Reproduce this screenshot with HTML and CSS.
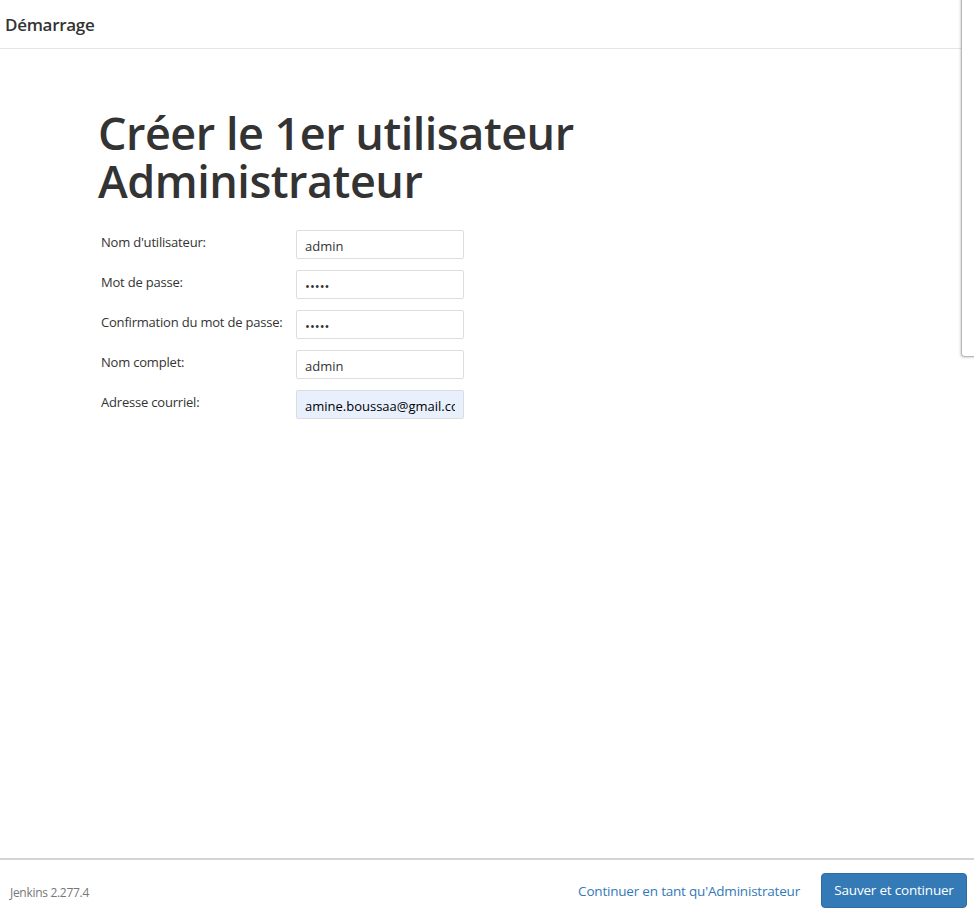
FILE: index.html
```html
<!DOCTYPE html>
<html lang="fr">
<head>
<meta charset="utf-8">
<title>Démarrage</title>
<link rel="stylesheet" href="styles.css">
</head>
<body>
<div class="backdrop-edge"></div>
<div class="page">
  <header class="topbar"><span class="title">Démarrage</span></header>
  <main class="content">
    <h1 class="heading">Créer le 1er utilisateur<br>Administrateur</h1>
    <form class="form">
      <div class="row"><label class="label">Nom d'utilisateur:</label><input class="field" type="text" value="admin"></div>
      <div class="row"><label class="label">Mot de passe:</label><input class="field" type="password" value="admin"></div>
      <div class="row"><label class="label">Confirmation du mot de passe:</label><input class="field" type="password" value="admin"></div>
      <div class="row"><label class="label">Nom complet:</label><input class="field" type="text" value="admin"></div>
      <div class="row"><label class="label">Adresse courriel:</label><input class="field autofill" type="text" value="amine.boussaa@gmail.com"></div>
    </form>
  </main>
  <footer class="footer">
    <span class="version">Jenkins 2.277.4</span>
    <div class="actions">
      <a class="link" href="#">Continuer en tant qu'Administrateur</a>
      <button class="btn" type="button">Sauver et continuer</button>
    </div>
  </footer>
</div>
</body>
</html>
```
FILE: styles.css
```css
html, body {
  margin: 0;
  padding: 0;
  background: #fff;
}
body {
  font-family: "Open Sans", "Noto Sans", "Liberation Sans", sans-serif;
  color: #333;
  width: 974px;
  height: 914px;
  overflow: hidden;
  position: relative;
}
.backdrop-edge {
  position: absolute;
  left: 961px;
  top: -4px;
  width: 40px;
  height: 360px;
  border-left: 1px solid #b8b8b8;
  border-bottom: 1px solid #b8b8b8;
  border-bottom-left-radius: 4px;
  box-shadow: -1px 1px 2px rgba(0,0,0,0.15);
}
.page {
  display: flex;
  flex-direction: column;
  height: 914px;
}
.topbar {
  height: 48px;
  border-bottom: 1px solid #e5e5e5;
  display: flex;
  align-items: center;
  padding-left: 5px;
  margin-right: 13px;
}
.title {
  font-size: 17px;
  font-weight: 600;
  color: #333;
  letter-spacing: -0.3px;
}
.content {
  flex: 1;
  padding: 60px 0 0 98px;
}
.heading {
  margin: 0 0 25px 0;
  font-size: 45px;
  line-height: 48px;
  font-weight: 600;
  color: #333;
  letter-spacing: -0.5px;
}
.form {
  display: flex;
  flex-direction: column;
  gap: 11px;
}
.row {
  display: flex;
  align-items: flex-start;
}
.label {
  width: 195px;
  padding-left: 3px;
  font-size: 13px;
  line-height: 24px;
  color: #333;
  letter-spacing: -0.2px;
}
.field {
  box-sizing: border-box;
  width: 168px;
  height: 29px;
  border: 1px solid #ddd;
  border-radius: 2px;
  padding: 3px 8px 0;
  font-family: inherit;
  font-size: 13px;
  color: #333;
  background: #fff;
  margin: 0;
}
.autofill {
  background: #e8f0fe;
  color: #000;
}
.footer {
  height: 54px;
  border-top: 2px solid #d4d4d4;
  display: flex;
  align-items: center;
  justify-content: space-between;
  padding: 0 7px 0 10px;
}
.version {
  font-size: 12px;
  color: #777;
  margin-top: 11px;
  letter-spacing: -0.3px;
}
.actions {
  display: flex;
  align-items: center;
  gap: 21px;
  margin-top: 6px;
}
.link {
  color: #337ab7;
  text-decoration: none;
  font-size: 13.5px;
  letter-spacing: -0.2px;
  margin-top: 2px;
}
.btn {
  background: #337ab7;
  border: 1px solid #2e6da4;
  color: #fff;
  border-radius: 4px;
  width: 146px;
  height: 35px;
  font-family: inherit;
  font-size: 13.5px;
  letter-spacing: -0.2px;
  padding: 0;
}
```
